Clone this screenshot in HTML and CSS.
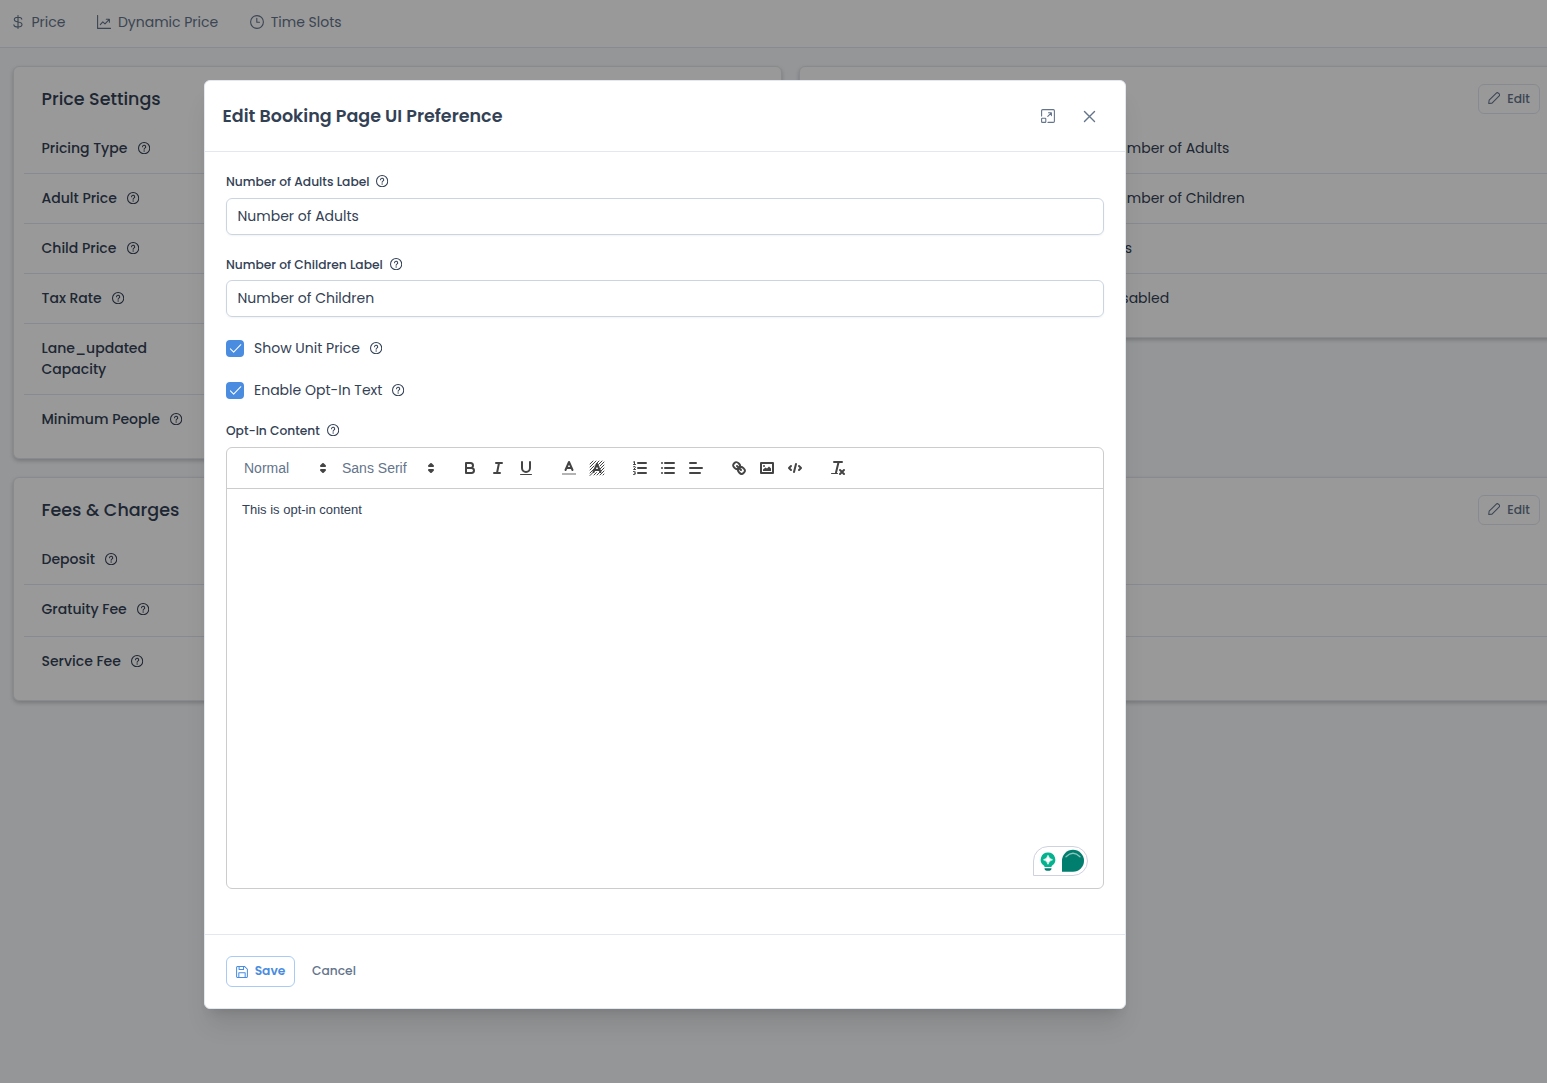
FILE: index.html
```html
<!DOCTYPE html>
<html lang="en">
<head>
  <meta charset="UTF-8">
  <meta name="viewport" content="width=device-width, initial-scale=1.0">
  <title>Price Settings</title>
<link rel="stylesheet" href="styles.css">
</head>
<body>
  <!-- icons -->
  <svg class="sprite">
    <symbol id="help" viewBox="0 0 14 14">
      <g fill="none" stroke="currentColor" stroke-width="1.2" stroke-linecap="round">
        <circle cx="7" cy="7" r="6.4"/>
        <path d="M5.2 5.5a1.8 1.7 0 1 1 2.6 1.5q-.8.4-.8 1.2"/>
      </g>
      <circle cx="7" cy="10.3" r=".8" fill="currentColor"/>
    </symbol>
    <symbol id="pencil" viewBox="0 0 14 14">
      <path d="M.8 13.200l.5-3.800L9.500 1.200a1.600 1.600 0 0 1 2.300 0l1 1a1.600 1.600 0 0 1 0 2.300L4.600 12.700z" fill="none" stroke="currentColor" stroke-width="1.200" stroke-linejoin="round"/>
    </symbol>
    <symbol id="check" viewBox="0 0 14 14">
      <path d="M1.500 7.400l3.500 3.500 7.700-8" fill="none" stroke="currentColor" stroke-width="1.100" stroke-linecap="round" stroke-linejoin="round"/>
    </symbol>
  </svg>

  <div class="tabs">
    <a class="tab">
      <svg class="tab-ico" viewBox="0 0 14 14"><path d="M7 .5v13M10.800 4.100C10.500 2.800 9 2.200 7 2.200S3.300 3 3.300 4.600 5 6.700 7 7s4 .9 4 2.500-1.700 2.500-4 2.500-3.900-.8-4.100-2.200"/></svg>
      <span>Price</span>
    </a>
    <a class="tab">
      <svg class="tab-ico" viewBox="0 0 14 14"><path d="M.6.5v12.900h13M3.300 9.600l2.500-2.800 2.200 2 4.300-4.500M9.300 4.200h3.100v3"/></svg>
      <span>Dynamic Price</span>
    </a>
    <a class="tab">
      <svg class="tab-ico" viewBox="0 0 14 14"><circle cx="7" cy="7" r="6.400"/><path d="M6.800 3.300v4h2.700"/></svg>
      <span>Time Slots</span>
    </a>
  </div>

  <div class="page">
    <div class="card price">
      <div class="card-head"><h2>Price Settings</h2></div>
      <div class="row"><span class="name">Pricing Type</span><svg class="help"><use href="#help"/></svg></div>
      <div class="row"><span class="name">Adult Price</span><svg class="help"><use href="#help"/></svg></div>
      <div class="row"><span class="name">Child Price</span><svg class="help"><use href="#help"/></svg></div>
      <div class="row"><span class="name">Tax Rate</span><svg class="help"><use href="#help"/></svg></div>
      <div class="row"><span class="name">Lane_updated<br>Capacity</span></div>
      <div class="row"><span class="name">Minimum People</span><svg class="help"><use href="#help"/></svg></div>
    </div>
    <div class="card ui">
      <div class="card-head"><button class="edit"><svg><use href="#pencil"/></svg><span>Edit</span></button></div>
      <div class="row"><span class="value">Number of Adults</span></div>
      <div class="row"><span class="value">Number of Children</span></div>
      <div class="row"><span class="value">Yes</span></div>
      <div class="row"><span class="value">Disabled</span></div>
    </div>
    <div class="card fees">
      <div class="card-head"><h2>Fees &amp; Charges</h2><button class="edit"><svg><use href="#pencil"/></svg><span>Edit</span></button></div>
      <div class="row"><span class="name">Deposit</span><svg class="help"><use href="#help"/></svg></div>
      <div class="row tall"><span class="name">Gratuity Fee</span><svg class="help"><use href="#help"/></svg></div>
      <div class="row"><span class="name">Service Fee</span><svg class="help"><use href="#help"/></svg></div>
    </div>
  </div>

  <div class="mask">
    <div class="dialog">
      <div class="dialog-head">
        <h1>Edit Booking Page UI Preference</h1>
        <svg class="head-ico max" viewBox="0 0 14 14"><path d="M.6 7V1.700Q.6.600 1.700.600h10.600q1.100 0 1.100 1.100v10.600q0 1.100-1.100 1.100H7M7.500 3.700h2.900v2.900M10.300 3.800L6.800 7.300M1.300 9.200h2.800q.7 0 .7.700v2.800q0 .7-.7.700H1.300q-.7 0-.7-.7V9.900q0-.7.700-.7z"/></svg>
        <svg class="head-ico close" viewBox="0 0 14 14"><path d="M1.600 1.600l10.800 10.800M12.400 1.600L1.600 12.400"/></svg>
      </div>

      <div class="dialog-body">
        <div class="label"><span>Number of Adults Label</span><svg class="help"><use href="#help"/></svg></div>
        <div class="input"><span>Number of Adults</span></div>
        <div class="label second"><span>Number of Children Label</span><svg class="help"><use href="#help"/></svg></div>
        <div class="input"><span>Number of Children</span></div>
        <div class="check"><i><svg><use href="#check"/></svg></i><span>Show Unit Price</span><svg class="help"><use href="#help"/></svg></div>
        <div class="check"><i><svg><use href="#check"/></svg></i><span>Enable Opt-In Text</span><svg class="help"><use href="#help"/></svg></div>
        <div class="label third"><span>Opt-In Content</span><svg class="help"><use href="#help"/></svg></div>

        <div class="editor">
          <div class="toolbar">
            <div class="picker"><span>Normal</span><svg viewBox="0 0 18 18"><path class="fs" d="M7 11l2 2 2-2zM7 7l2-2 2 2z"/></svg></div>
            <div class="picker font"><span>Sans Serif</span><svg viewBox="0 0 18 18"><path class="fs" d="M7 11l2 2 2-2zM7 7l2-2 2 2z"/></svg></div>
            <div class="group">
              <svg viewBox="0 0 18 18"><path class="s" d="M5 4h4.500A2.500 2.500 0 0 1 12 6.500 2.500 2.500 0 0 1 9.500 9H5V4zM5 9h5.500a2.500 2.500 0 0 1 0 5H5V9z"/></svg>
              <svg viewBox="0 0 18 18"><path class="s" d="M7 4h6M5 14h6M8 14l2-10"/></svg>
              <svg viewBox="0 0 18 18"><path class="s" d="M5 3v6a4.012 4.012 0 0 0 4 4 4.012 4.012 0 0 0 4-4V3"/><rect class="f" x="3" y="15" width="12" height="1" rx=".5"/></svg>
            </div>
            <div class="group">
              <svg viewBox="0 0 18 18"><path class="s soft" d="M2 15h14"/><path class="s" d="M5.500 11L9 3l3.500 8M11.630 9H6.380"/></svg>
              <svg viewBox="0 0 18 18">
                <path class="thin" d="M2 5l3-3M2 8l6-6M2 11l4-4M8 5l3-3M2 14l4-4M10.500 5.500L14 2M2 16.500l3-3M12 7l4-4M12 10l4-4M13 12l3-3M12 16l4-4M9 16l3-3M6 16l2.500-2.500M15 16l1-1"/>
                <path class="s" d="M5.500 13L9 5l3.500 8M11.630 11H6.380"/>
              </svg>
            </div>
            <div class="group">
              <svg viewBox="0 0 18 18"><path class="s" d="M7 4h8M7 9h8M7 14h8"/><path class="thin" d="M2.500 5.500h2M3.500 5.500v-3l-1 .5M2.500 7.700q2-.8 2 .4 0 .6-2 2.400h2M2.500 12.500h1.200q1 .2.600 1-.3.500-1.100.5 1.500 0 1.300 1-.2.700-2 .5"/></svg>
              <svg viewBox="0 0 18 18"><path class="s" d="M6 4h9M6 9h9M6 14h9M3 4h0M3 9h0M3 14h0"/></svg>
              <svg viewBox="0 0 18 18"><path class="s" d="M3 9h12M3 14h10M3 4h6"/></svg>
            </div>
            <div class="group">
              <svg viewBox="0 0 18 18"><path class="s" d="M7 7l4 4M8.900 4.577a3.476 3.476 0 0 1 .360 4.679A3.476 3.476 0 0 1 4.577 8.900C3.185 7.500 2.035 6.400 4.217 4.217S7.500 3.185 8.900 4.577zM13.423 9.100a3.476 3.476 0 0 0-4.679-.36 3.476 3.476 0 0 0 .36 4.679c1.392 1.392 2.500 2.542 4.679.36s1.035-3.287-.36-4.679z"/></svg>
              <svg viewBox="0 0 18 18"><rect class="s" x="3" y="4" width="12" height="10"/><circle class="f" cx="6" cy="7" r="1"/><path class="f" d="M5 12h8V9.500L11 7.500 9 9.500 7.500 8.500 5 10.500z"/></svg>
              <svg viewBox="0 0 18 18"><path class="s" d="M5 7L3 9l2 2M13 7l2 2-2 2M10 5l-2 8"/></svg>
            </div>
            <div class="group">
              <svg viewBox="0 0 18 18"><path class="s" d="M5 3h8M9.600 3L7 13.500M11 11l4 4M15 11l-4 4"/><rect class="f" x="2" y="14" width="7" height="1" rx=".5"/></svg>
            </div>
          </div>
          <div class="content">
            <p>This is opt-in content</p>
            <svg class="assist" viewBox="0 0 55 30">
              <path d="M.5 29.500V15A14.500 14.500 0 0 1 15 .5h25a14.500 14.500 0 0 1 0 29z" fill="#fff" stroke="#cfd1e0"/>
              <path d="M15 6.500a7.200 7.200 0 0 1 4.200 13.100q-.7.500-.7 1.400h-7q0-.9-.7-1.400A7.200 7.200 0 0 1 15 6.500z" fill="#05b28f"/>
              <path d="M11.500 22.200h7q0 2.600-3.500 2.600t-3.500-2.600z" fill="#027e6f"/>
              <path d="M15 9.300q.8 3.700 4.500 4.500-3.700.8-4.500 4.500-.8-3.700-4.500-4.500 3.700-.8 4.500-4.500z" fill="#fff" stroke="#fff" stroke-width=".7"/>
              <path d="M29 25.700v-11a11 11 0 1 1 11 11z" fill="#027e6f"/>
              <path d="M33 10.800q7-7 14 0" fill="none" stroke="#8cc5bd" stroke-width="1.300" stroke-linecap="round"/>
            </svg>
          </div>
        </div>
      </div>

      <div class="dialog-foot">
        <button class="save"><svg viewBox="0 0 14 14"><path d="M1.700.700h8.500l3.100 3.100v8.500q0 1-1 1H1.700q-1 0-1-1V1.700q0-1 1-1zM3.600.900v3.300h5.200V.9M3.300 13.200V8h7.400v5.200"/></svg><span>Save</span></button>
        <button class="cancel"><span>Cancel</span></button>
      </div>
    </div>
  </div>
</body>
</html>
```
FILE: styles.css
```css
*{margin: 0;padding: 0;box-sizing: border-box;}
body{
  height: 1083px;
  overflow: hidden;
  background: #f8fafc;
  color: #334155;
  font: 14px/21px Poppins, Inter, sans-serif;
}
svg{display: block;flex: none;}
button{font: inherit;background: none;}
.sprite{position: absolute;width: 0;height: 0;}
.help{width: 12.25px;height: 12.25px;margin-bottom: 1px;}

/* tabs */
.tabs{
  display: flex;
  height: 48px;
  padding: 0 12px 3px 10.5px;
  align-items: center;
  background: #fff;
  border-bottom: 1px solid #e2e8f0;
  color: #64748b;
}
.tab{display: flex;align-items: center;gap: 7px;margin-right: 31.5px;}
.tab-ico{width: 14px;height: 14px;fill: none;stroke: currentColor;stroke-width: 1.1;stroke-linecap: round;stroke-linejoin: round;}

/* cards */
.page{
  display: grid;
  grid-template-columns: 769px 769px;
  gap: 18px 17px;
  width: 1555px;
  margin: 18px 0 0 13px;
  align-items: start;
}
.card{
  background: #fff;
  border: 1px solid #e5e7eb;
  border-radius: 6px;
  padding: 17px 10px 14px;
  box-shadow: 0 2px 4px rgba(0,0,0,.2);
}
.card.fees{grid-column: 1 / 3;}
.card-head{display: flex;height: 40px;padding: 0 17px 10px 17.5px;align-items: center;}
.card-head h2{font-size: 17.5px;font-weight: 500;}
.edit{
  display: flex;
  align-items: center;
  justify-content: center;
  gap: 7px;
  width: 62px;height: 30px;
  padding-bottom: 1px;
  margin-left: auto;
  border: 1px solid #e2e8f0;
  border-radius: 6px;
  color: #64748b;
  font-size: 12.25px;
  font-weight: 500;
}
.edit svg{width: 12.25px;height: 12.25px;}
.row{
  display: flex;
  align-items: center;
  gap: 10.5px;
  padding: 14px 17.5px;
  border-bottom: 1px solid #e2e8f0;
}
.row:last-child{border-bottom: none;}
.row.tall{padding-bottom: 16px;}
.name{font-weight: 500;}
.ui .row{padding-left: 298px;}

/* dialog */
.mask{
  position: absolute;
  top: 0;left: 0;
  width: 100%;height: 1083px;
  padding: 80px 0 0 204px;
  background: rgba(0,0,0,.4);
}
.dialog{
  width: 922px;height: 929px;
  display: flex;
  flex-direction: column;
  background: #fff;
  border: 1px solid #e2e8f0;
  border-radius: 6px;
  box-shadow: 0 20px 25px -5px rgba(0,0,0,.1), 0 8px 10px -6px rgba(0,0,0,.1);
}
.dialog-head{
  display: flex;
  height: 71px;
  padding: 0 29px 0 17.5px;
  align-items: center;
  border-bottom: 1px solid #e2e8f0;
}
.dialog-head h1{font-size: 17.5px;font-weight: 600;flex: 1;}
.head-ico{width: 14px;height: 14px;fill: none;stroke: #64748b;stroke-width: 1.1;stroke-linecap: round;stroke-linejoin: round;}
.head-ico.max{margin-right: 28px;}
.head-ico.close{width: 13px;height: 13px;stroke-width: 1.5;}
.dialog-body{flex: 1;padding: 19px 21px 0;}
.label{
  display: flex;
  align-items: center;
  gap: 7px;
  height: 21px;
  margin-bottom: 6px;
  font-size: 12.25px;
  font-weight: 500;
}
.label.second{margin-top: 19px;margin-bottom: 5px;}
.label.third{margin-top: 19px;}
.input{
  display: flex;
  align-items: center;
  height: 37px;
  padding: 0 10.5px;
  border: 1px solid #cbd5e1;
  border-radius: 6px;
  box-shadow: 0 1px 2px rgba(18,18,23,.05);
}
.check{display: flex;align-items: center;height: 21px;margin-top: 21px;}
.check i{
  display: flex;
  width: 18px;height: 17px;
  margin-right: 10px;
  align-items: center;
  justify-content: center;
  border-radius: 4px;
  background: #4a8ce0;
  color: #fff;
}
.check i svg{width: 13px;height: 13px;}
.check .help{margin-left: 10px;}

/* rich text editor */
.editor{
  height: 442px;
  border: 1px solid #ccc;
  border-radius: 6px;
  font-family: "Liberation Sans", Arial, sans-serif;
}
.toolbar{
  display: flex;
  height: 41px;
  padding: 0 8px;
  align-items: center;
  border-bottom: 1px solid #ccc;
}
.picker{display: flex;align-items: center;justify-content: space-between;width: 98px;padding-left: 9px;color: #64748b;}
.picker.font{width: 108px;margin-right: 15px;}
.picker svg{width: 18px;height: 18px;margin-right: 1px;}
.group{display: flex;margin-right: 15px;}
.group svg{width: 28px;height: 18px;}
.s{fill: none;stroke: #444;stroke-width: 2;stroke-linecap: round;stroke-linejoin: round;}
.s.soft{opacity: .4;stroke-linecap: butt;}
.thin{fill: none;stroke: #444;stroke-width: 1;stroke-linecap: round;}
.f{fill: #444;}
.fs{fill: #444;stroke: #444;stroke-width: 2;stroke-linejoin: round;}
.content{position: relative;height: 399px;padding: 12px 15px;font-size: 13px;line-height: 18px;}
.assist{position: absolute;right: 15px;bottom: 12px;width: 55px;height: 30px;}

.dialog-foot{
  display: flex;
  align-items: center;
  height: 74px;
  padding: 0 21px;
  border-top: 1px solid #e2e8f0;
  font-size: 12.25px;
  font-weight: 500;
}
.save{
  display: flex;
  align-items: center;
  justify-content: center;
  gap: 7px;
  width: 69px;height: 31px;
  border: 1px solid #a9caf3;
  border-radius: 6px;
  color: #4a8ce0;
  font-weight: 600;
}
.save span{padding-bottom: 2px;}
.save svg{width: 12px;height: 12px;fill: none;stroke: currentColor;stroke-width: 1.2;stroke-linejoin: round;}
.cancel{margin-left: 17px;padding-bottom: 2px;border: none;color: #64748b;}
```
